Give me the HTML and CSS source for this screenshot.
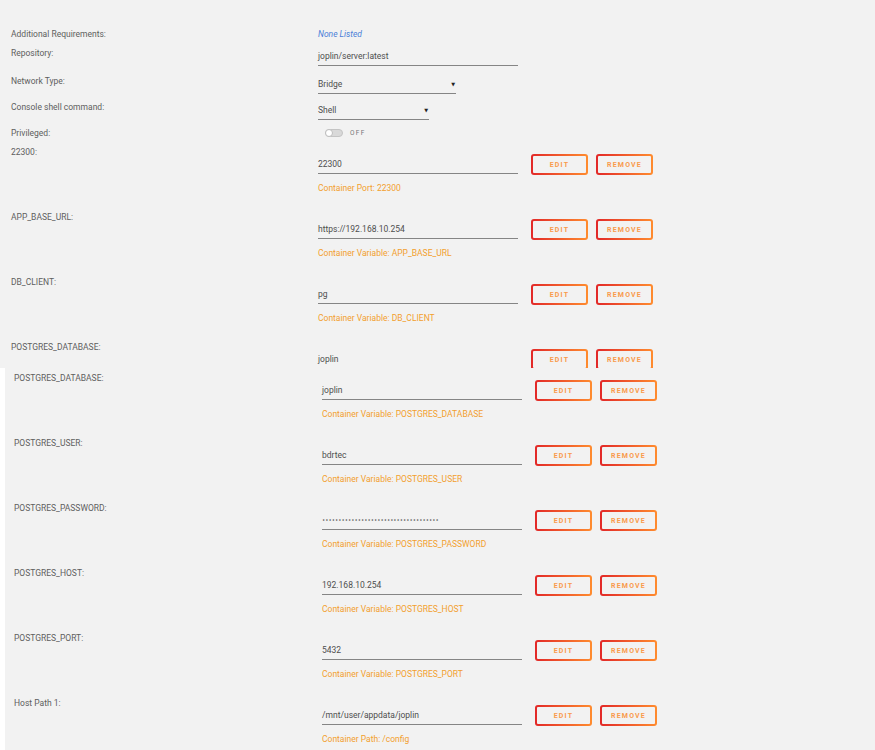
FILE: index.html
```html
<!DOCTYPE html>
<html lang="en">
<head>
    <meta charset="UTF-8">
    <title>Container Settings</title>
    <link rel="stylesheet" href="styles.css">
</head>
<body>
    <!-- first screen -->
    <div class="panel top">
        <div class="row short">
            <span class="label">Additional Requirements:</span>
            <span class="note">None Listed</span>
        </div>
        <div class="row repo">
            <span class="label">Repository:</span>
            <div class="field">joplin/server:latest</div>
        </div>
        <div class="row pick">
            <span class="label">Network Type:</span>
            <div class="field select bridge"><span>Bridge</span><span class="arrow">&#9660;</span></div>
        </div>
        <div class="row pick">
            <span class="label">Console shell command:</span>
            <div class="field select shell"><span>Shell</span><span class="arrow">&#9660;</span></div>
        </div>
        <div class="row short">
            <span class="label">Privileged:</span>
            <div class="toggle"><span class="track"><span class="knob"></span></span><span class="state">OFF</span></div>
        </div>

        <div class="row docker">
            <span class="label">22300:</span>
            <div class="value">
                <div class="field">22300</div>
                <div class="hint">Container Port: 22300</div>
            </div>
            <div class="actions"><button class="btn">Edit</button><button class="btn">Remove</button></div>
        </div>
        <div class="row docker">
            <span class="label">APP_BASE_URL:</span>
            <div class="value">
                <div class="field">https://192.168.10.254</div>
                <div class="hint">Container Variable: APP_BASE_URL</div>
            </div>
            <div class="actions"><button class="btn">Edit</button><button class="btn">Remove</button></div>
        </div>
        <div class="row docker">
            <span class="label">DB_CLIENT:</span>
            <div class="value">
                <div class="field">pg</div>
                <div class="hint">Container Variable: DB_CLIENT</div>
            </div>
            <div class="actions"><button class="btn">Edit</button><button class="btn">Remove</button></div>
        </div>
        <div class="row docker last">
            <span class="label">POSTGRES_DATABASE:</span>
            <div class="value">
                <div class="field plain">joplin</div>
            </div>
            <div class="actions"><button class="btn">Edit</button><button class="btn">Remove</button></div>
        </div>
    </div>

    <!-- second screen -->
    <div class="panel bottom">
        <div class="row docker">
            <span class="label">POSTGRES_DATABASE:</span>
            <div class="value">
                <div class="field">joplin</div>
                <div class="hint">Container Variable: POSTGRES_DATABASE</div>
            </div>
            <div class="actions"><button class="btn">Edit</button><button class="btn">Remove</button></div>
        </div>
        <div class="row docker">
            <span class="label">POSTGRES_USER:</span>
            <div class="value">
                <div class="field">bdrtec</div>
                <div class="hint">Container Variable: POSTGRES_USER</div>
            </div>
            <div class="actions"><button class="btn">Edit</button><button class="btn">Remove</button></div>
        </div>
        <div class="row docker">
            <span class="label">POSTGRES_PASSWORD:</span>
            <div class="value">
                <div class="field dots">&bull;&bull;&bull;&bull;&bull;&bull;&bull;&bull;&bull;&bull;&bull;&bull;&bull;&bull;&bull;&bull;&bull;&bull;&bull;&bull;&bull;&bull;&bull;&bull;&bull;&bull;&bull;&bull;&bull;&bull;&bull;&bull;&bull;&bull;&bull;&bull;</div>
                <div class="hint">Container Variable: POSTGRES_PASSWORD</div>
            </div>
            <div class="actions"><button class="btn">Edit</button><button class="btn">Remove</button></div>
        </div>
        <div class="row docker">
            <span class="label">POSTGRES_HOST:</span>
            <div class="value">
                <div class="field">192.168.10.254</div>
                <div class="hint">Container Variable: POSTGRES_HOST</div>
            </div>
            <div class="actions"><button class="btn">Edit</button><button class="btn">Remove</button></div>
        </div>
        <div class="row docker">
            <span class="label">POSTGRES_PORT:</span>
            <div class="value">
                <div class="field">5432</div>
                <div class="hint">Container Variable: POSTGRES_PORT</div>
            </div>
            <div class="actions"><button class="btn">Edit</button><button class="btn">Remove</button></div>
        </div>
        <div class="row docker">
            <span class="label">Host Path 1:</span>
            <div class="value">
                <div class="field">/mnt/user/appdata/joplin</div>
                <div class="hint">Container Path: /config</div>
            </div>
            <div class="actions"><button class="btn">Edit</button><button class="btn">Remove</button></div>
        </div>
    </div>
</body>
</html>
```

FILE: styles.css
```css
body {
    margin: 0;
    background-color: #fff;
    font-family: Roboto, 'Liberation Sans', sans-serif;
    font-size: 8.5px;
    color: #5e5e5e;
}

.panel {
    background-color: #f2f2f2;
    box-sizing: border-box;
    overflow: hidden;
}

.panel.top {
    height: 368px;
    padding: 26px 0 0 11px;
}

.panel.bottom {
    height: 382px;
    margin-left: 5px;
    padding: 2px 0 0 9px;
}

.row {
    display: flex;
    align-items: flex-start;
}

.row.short {
    height: 19px;
}

.row.repo {
    height: 28px;
}

.row.pick {
    height: 26px;
}

.row.docker {
    height: 65px;
}

.row.docker.last {
    height: 29px;
}

.label {
    width: 307px;
    flex-shrink: 0;
    padding-top: 1px;
    line-height: 14px;
}

.bottom .label {
    width: 308px;
}

.note {
    line-height: 14px;
    padding-top: 1px;
    font-style: italic;
    color: #4a7ed8;
}

.field {
    width: 200px;
    height: 21px;
    box-sizing: border-box;
    padding-top: 4px;
    line-height: 14px;
    border-bottom: 1px solid #858585;
    color: #4e4e4e;
    white-space: nowrap;
}

.field.plain {
    border-bottom: none;
}

.field.select {
    display: flex;
    justify-content: space-between;
    padding-right: 1px;
}

.field.bridge {
    width: 138px;
}

.field.shell {
    width: 111px;
}

.arrow {
    font-family: 'DejaVu Sans', sans-serif;
    font-size: 5px;
    color: #222;
}

.field.dots {
    font-family: 'DejaVu Sans', sans-serif;
    font-size: 5.5px;
    color: #555;
}

.toggle {
    display: flex;
    align-items: center;
    gap: 7px;
    height: 14px;
    margin-top: 1px;
    margin-left: 7px;
}

.track {
    display: block;
    width: 18px;
    height: 8px;
    box-sizing: border-box;
    border: 1px solid #c4c4c4;
    border-radius: 4px;
    background-color: #d9d9d9;
    position: relative;
}

.knob {
    position: absolute;
    left: -1px;
    top: -1px;
    width: 8px;
    height: 8px;
    box-sizing: border-box;
    border: 1px solid #bdbdbd;
    border-radius: 50%;
    background-color: #fff;
}

.state {
    font-size: 6.5px;
    letter-spacing: 1.3px;
    color: #777;
}

.value {
    padding-top: 9px;
}

.hint {
    margin-top: 7px;
    line-height: 14px;
    color: #f29f2e;
}

.actions {
    display: flex;
    gap: 8px;
    margin-left: 13px;
    margin-top: 10px;
}

.btn {
    width: 57px;
    height: 21px;
    padding: 0;
    border: 2px solid transparent;
    border-radius: 3px;
    background: linear-gradient(#f2f2f2, #f2f2f2) padding-box,
                linear-gradient(90deg, #e22828, #ff8c2f) border-box;
    font-family: Roboto, 'Liberation Sans', sans-serif;
    font-size: 7px;
    font-weight: 700;
    letter-spacing: 1.2px;
    text-transform: uppercase;
    color: #f99a4c;
    cursor: pointer;
}
```
